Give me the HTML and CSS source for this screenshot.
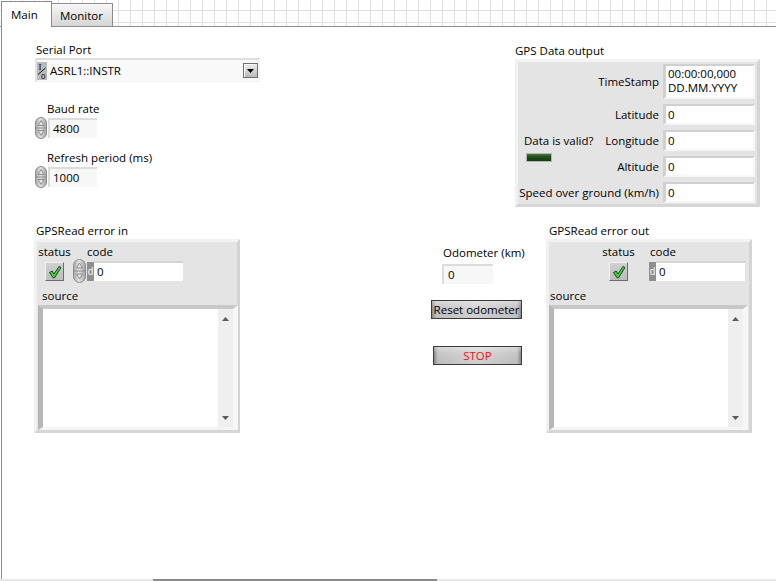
FILE: index.html
```html
<!DOCTYPE html>
<html>
<head>
<meta charset="utf-8">
<title>GPS Read</title>
<link rel="stylesheet" href="styles.css">
</head>
<body>
<div class="window">
  <div class="tabstrip">
    <div class="tab tab-main">Main</div>
    <div class="tab tab-monitor">Monitor</div>
  </div>
  <div class="panel">
    <svg class="defs" width="0" height="0" aria-hidden="true">
      <defs>
        <linearGradient id="spinGrad" x1="0" x2="1" y1="0" y2="0">
          <stop offset="0" stop-color="#a4a4a4"/>
          <stop offset="0.45" stop-color="#e6e6e6"/>
          <stop offset="1" stop-color="#a0a0a0"/>
        </linearGradient>
        <linearGradient id="ledGrad" x1="0" x2="0" y1="0" y2="1">
          <stop offset="0" stop-color="#5c7d4c"/>
          <stop offset="0.35" stop-color="#24501a"/>
          <stop offset="1" stop-color="#123a0c"/>
        </linearGradient>
      </defs>
    </svg>

    <div class="ctl serial">
      <div class="label">Serial Port</div>
      <div class="ring">
        <svg class="io" width="10" height="18" viewBox="0 0 10 18">
          <rect x="0" y="0" width="10" height="18" fill="#b9b9b9"/>
          <text x="1.5" y="8" font-family="Liberation Serif, serif" font-size="9" fill="#000">I</text>
          <line x1="1" y1="12.5" x2="8.5" y2="6" stroke="#000" stroke-width="0.9"/>
          <text x="4" y="17" font-family="Liberation Sans, sans-serif" font-size="8" fill="#000">0</text>
        </svg>
        <span class="ring-text">ASRL1::INSTR</span>
        <span class="drop">
          <svg width="7" height="4" viewBox="0 0 7 4"><path d="M0 0 H7 L3.5 4 Z" fill="#000"/></svg>
        </span>
      </div>
    </div>

    <div class="ctl baud">
      <div class="label numlabel">Baud rate</div>
      <div class="numrow">
        <svg class="spin" width="12" height="22" viewBox="0 0 12 22">
          <rect x="0.5" y="0.5" width="11" height="21" rx="5.5" fill="url(#spinGrad)" stroke="#8c8c8c"/>
          <line x1="1" y1="11" x2="11" y2="11" stroke="#8c8c8c"/>
          <path d="M6 3.5 L9 8.5 L3 8.5 Z" fill="#e4e4e4" stroke="#777" stroke-width="0.8"/>
          <path d="M6 18.5 L9 13.5 L3 13.5 Z" fill="#e4e4e4" stroke="#777" stroke-width="0.8"/>
        </svg>
        <div class="numfield">4800</div>
      </div>
    </div>

    <div class="ctl refresh">
      <div class="label numlabel">Refresh period (ms)</div>
      <div class="numrow">
        <svg class="spin" width="12" height="22" viewBox="0 0 12 22">
          <rect x="0.5" y="0.5" width="11" height="21" rx="5.5" fill="url(#spinGrad)" stroke="#8c8c8c"/>
          <line x1="1" y1="11" x2="11" y2="11" stroke="#8c8c8c"/>
          <path d="M6 3.5 L9 8.5 L3 8.5 Z" fill="#e4e4e4" stroke="#777" stroke-width="0.8"/>
          <path d="M6 18.5 L9 13.5 L3 13.5 Z" fill="#e4e4e4" stroke="#777" stroke-width="0.8"/>
        </svg>
        <div class="numfield">1000</div>
      </div>
    </div>

    <div class="ctl gps">
      <div class="label">GPS Data output</div>
      <div class="cluster gps-box">
        <div class="glabel r1">TimeStamp</div>
        <div class="ind ts r1">
          <div class="ts-line">00:00:00,000</div>
          <div class="ts-line">DD.MM.YYYY</div>
        </div>
        <div class="glabel r2">Latitude</div>
        <div class="ind r2">0</div>
        <div class="valid">
          <span class="valid-text">Data is valid?</span>
          <svg class="led" width="26" height="9" viewBox="0 0 26 9">
            <rect x="0.5" y="0.5" width="25" height="8" fill="url(#ledGrad)" stroke="#b4b4b4"/>
          </svg>
        </div>
        <div class="glabel r3">Longitude</div>
        <div class="ind r3">0</div>
        <div class="glabel r4">Altitude</div>
        <div class="ind r4">0</div>
        <div class="glabel r5 wide">Speed over ground (km/h)</div>
        <div class="ind r5">0</div>
      </div>
    </div>

    <div class="ctl errin">
      <div class="label">GPSRead error in</div>
      <div class="cluster err-box">
        <div class="etop">
          <div class="status-col">
            <div class="label">status</div>
            <div class="statbtn">
              <svg width="14" height="14" viewBox="0 0 14 14"><path d="M1.5 7.5 L4.2 6 L6 9 L11.2 1.2 L13 2.6 L6.6 12.8 L5 12.8 Z" fill="#38d038" stroke="#1c3a1c" stroke-width="0.9" stroke-linejoin="round"/></svg>
            </div>
          </div>
          <div class="code-col">
            <div class="label code-label">code</div>
            <div class="code-row">
              <svg class="spin" width="13" height="24" viewBox="0 0 13 24">
                <rect x="0.5" y="0.5" width="12" height="23" rx="6" fill="url(#spinGrad)" stroke="#8c8c8c"/>
                <line x1="1" y1="12" x2="12" y2="12" stroke="#8c8c8c"/>
                <path d="M6.5 4 L9.5 9 L3.5 9 Z" fill="#e4e4e4" stroke="#777" stroke-width="0.8"/>
                <path d="M6.5 20 L9.5 15 L3.5 15 Z" fill="#e4e4e4" stroke="#777" stroke-width="0.8"/>
              </svg>
              <span class="radix">d</span>
              <div class="codefield">0</div>
            </div>
          </div>
        </div>
        <div class="label source-label">source</div>
        <div class="srcbox">
          <div class="sb">
            <svg width="7" height="4" viewBox="0 0 7 4"><path d="M3.5 0 L7 4 H0 Z" fill="#5a5a5a"/></svg>
            <svg width="7" height="4" viewBox="0 0 7 4"><path d="M0 0 H7 L3.5 4 Z" fill="#5a5a5a"/></svg>
          </div>
        </div>
      </div>
    </div>

    <div class="ctl odo">
      <div class="label numlabel">Odometer (km)</div>
      <div class="numfield odofield">0</div>
      <div class="btn btn-reset">Reset odometer</div>
      <div class="btn btn-stop">STOP</div>
    </div>

    <div class="ctl errout">
      <div class="label">GPSRead error out</div>
      <div class="cluster err-box">
        <div class="etop">
          <div class="status-col">
            <div class="label">status</div>
            <div class="statbtn">
              <svg width="14" height="14" viewBox="0 0 14 14"><path d="M1.5 7.5 L4.2 6 L6 9 L11.2 1.2 L13 2.6 L6.6 12.8 L5 12.8 Z" fill="#38d038" stroke="#1c3a1c" stroke-width="0.9" stroke-linejoin="round"/></svg>
            </div>
          </div>
          <div class="code-col">
            <div class="label code-label">code</div>
            <div class="code-row">
              <span class="radix">d</span>
              <div class="codefield">0</div>
            </div>
          </div>
        </div>
        <div class="label source-label">source</div>
        <div class="srcbox">
          <div class="sb">
            <svg width="7" height="4" viewBox="0 0 7 4"><path d="M3.5 0 L7 4 H0 Z" fill="#5a5a5a"/></svg>
            <svg width="7" height="4" viewBox="0 0 7 4"><path d="M0 0 H7 L3.5 4 Z" fill="#5a5a5a"/></svg>
          </div>
        </div>
      </div>
    </div>
  </div>
  <div class="hscroll"><div class="thumb"></div></div>
</div>
</body>
</html>
```

FILE: styles.css
```css
html, body {
  margin: 0;
  padding: 0;
  background: #fff;
}

body {
  width: 776px;
  height: 581px;
  overflow: hidden;
  font-family: "Open Sans", "Noto Sans", sans-serif;
  font-size: 11.5px;
  color: #000;
}

.window {
  width: 776px;
  height: 581px;
  display: flex;
  flex-direction: column;
}

/* ---------- tabs ---------- */
.tabstrip {
  height: 27px;
  flex: none;
  box-sizing: border-box;
  border-bottom: 1px solid #8c8c8c;
  display: flex;
  align-items: flex-end;
  padding-left: 1px;
  background-color: #fff;
  background-image:
    linear-gradient(to right, #e0e0e0 1px, transparent 1px),
    linear-gradient(to bottom, #e0e0e0 1px, transparent 1px);
  background-size: 12px 12px;
  background-position: 10px 10px;
}

.tab {
  box-sizing: border-box;
  display: flex;
  align-items: center;
  white-space: nowrap;
}

.tab-main {
  width: 51px;
  height: 26px;
  margin-bottom: -1px;
  border: 1px solid #8c8c8c;
  border-bottom: none;
  background: #fff;
  padding-left: 9px;
  padding-bottom: 1px;
}

.tab-monitor {
  width: 61px;
  height: 23px;
  border: 1px solid #8c8c8c;
  border-left: none;
  border-bottom: none;
  background: linear-gradient(#f7f7f7, #d5d5d5);
  padding-left: 8px;
}

/* ---------- panel ---------- */
.panel {
  position: relative;
  height: 552px;
  flex: none;
  margin-left: 1px;
  border-left: 1px solid #8c8c8c;
}

.defs {
  position: absolute;
  width: 0;
  height: 0;
}

.hscroll {
  height: 2px;
  flex: none;
  display: flex;
  background: #e6e6e6;
}

.hscroll .thumb {
  margin-left: 153px;
  width: 284px;
  background: #8a8a8a;
}

.ctl {
  position: absolute;
  display: flex;
  flex-direction: column;
}

.label {
  height: 14px;
  line-height: 14px;
  white-space: nowrap;
}

/* ---------- serial port ring ---------- */
.serial { left: 33px; top: 16px; }
.serial > .label { padding-left: 1px; margin-bottom: 1px; }

.ring {
  width: 225px;
  height: 24px;
  box-sizing: border-box;
  display: flex;
  align-items: center;
  background: #f9f9f9;
  border-style: solid;
  border-width: 2px 1px 1px 2px;
  border-color: #dedede #f2f2f2 #f2f2f2 #e2e2e2;
}

.io {
  flex: none;
  margin-right: 3px;
}

.ring-text {
  flex: 1;
  white-space: nowrap;
}

.drop {
  width: 15px;
  height: 15px;
  box-sizing: border-box;
  margin-right: 1px;
  display: flex;
  align-items: center;
  justify-content: center;
  border: 1px solid #6e6e6e;
  background: linear-gradient(#eeeeee, #b9b9b9);
  box-shadow: inset 1px 1px 0 #fafafa;
}

/* ---------- numeric controls ---------- */
.baud { left: 33px; top: 75px; }
.refresh { left: 33px; top: 124px; }

.numlabel { padding-left: 12px; }

.numrow {
  display: flex;
  align-items: center;
  height: 23px;
}

.spin { flex: none; }

.numfield {
  width: 49px;
  height: 20px;
  box-sizing: border-box;
  margin-left: 1px;
  background: #f7f7f7;
  border-top: 2px solid #dcdcdc;
  border-left: 2px solid #dcdcdc;
  padding-left: 3px;
  line-height: 17px;
}

/* ---------- clusters ---------- */
.cluster {
  box-sizing: border-box;
  background: #e4e4e4;
  border: 3px solid;
  border-color: #f3f3f3 #d4d4d4 #d6d6d6 #f1f1f1;
}

.gps { left: 513px; top: 17px; }
.gps > .label { margin-bottom: 1px; }

.gps-box {
  width: 245px;
  height: 148px;
  display: grid;
  grid-template-columns: 76px 1fr 92px;
  grid-template-rows: 35px repeat(4, 21px);
  column-gap: 4px;
  row-gap: 5px;
  padding: 2px 2px 0 0;
}

.glabel {
  grid-column: 2;
  display: flex;
  align-items: center;
  justify-content: flex-end;
  white-space: nowrap;
}

.glabel.wide { grid-column: 1 / 3; }

.r1 { grid-row: 1; }
.r2 { grid-row: 2; }
.r3 { grid-row: 3; }
.r4 { grid-row: 4; }
.r5 { grid-row: 5; }

.ind {
  grid-column: 3;
  box-sizing: border-box;
  background: #fff;
  border-style: solid;
  border-width: 2px 2px 2px 3px;
  border-color: #d0d0d0 #f6f6f6 #f6f6f6 #d0d0d0;
  padding-left: 2px;
  line-height: 17px;
  white-space: nowrap;
}

.ind.ts {
  display: flex;
  flex-direction: column;
  padding-top: 1px;
}

.ts-line {
  height: 14px;
  line-height: 14px;
}

.valid {
  grid-column: 1;
  grid-row: 3 / 5;
  display: flex;
  flex-direction: column;
  align-items: flex-start;
  padding-left: 6px;
}

.valid-text {
  line-height: 21px;
  white-space: nowrap;
}

.led {
  margin-left: 2px;
  margin-top: 2px;
}

/* ---------- error clusters ---------- */
.errin { left: 32px; top: 197px; }
.errin > .label { padding-left: 2px; margin-bottom: 1px; }
.errout { left: 544px; top: 197px; }
.errout > .label { padding-left: 3px; margin-bottom: 1px; }

.err-box {
  width: 206px;
  height: 194px;
  display: flex;
  flex-direction: column;
}

.etop {
  display: flex;
  padding-top: 3px;
}

.status-col {
  display: flex;
  flex-direction: column;
  align-items: center;
  width: 31px;
}

.errin .status-col { margin-left: 2px; }
.errout .status-col { margin-left: 54px; }

.statbtn {
  width: 19px;
  height: 19px;
  margin-top: 3px;
  box-sizing: border-box;
  background: linear-gradient(#d0d0d0, #bcbcbc);
  border: 1px solid;
  border-color: #f2f2f2 #6c6c6c #6c6c6c #f2f2f2;
  display: flex;
  align-items: center;
  justify-content: center;
}

.errin .code-col { margin-left: 3px; }
.errout .code-col { margin-left: 15px; }

.errin .code-label { padding-left: 14px; }
.errout .code-label { padding-left: 1px; }

.code-row {
  display: flex;
  align-items: center;
  height: 24px;
}

.radix {
  width: 7px;
  height: 19px;
  background: #8e8e8e;
  color: #f4f4f4;
  font-family: "Liberation Sans", sans-serif;
  font-size: 10px;
  line-height: 19px;
  text-align: center;
  overflow: hidden;
}

.errin .radix { margin-left: 1px; }

.codefield {
  height: 20px;
  box-sizing: border-box;
  background: #fff;
  border-top: 2px solid #d4d4d4;
  padding-left: 3px;
  line-height: 17px;
}

.errin .codefield { width: 89px; }
.errout .codefield { width: 89px; }

.source-label { margin-top: 6px; }
.errin .source-label { padding-left: 5px; }
.errout .source-label { padding-left: 1px; }

.srcbox {
  height: 125px;
  margin-top: 2px;
  box-sizing: border-box;
  display: flex;
  background: #fff;
  border-style: solid;
  border-width: 4px 5px 3px 5px;
  border-color: #c8c8c8 #f7f7f7 #f4f4f4 #b6b6b6;
}

.errin .srcbox { width: 200px; margin-left: 1px; }
.errout .srcbox { width: 199px; }

.sb {
  margin-left: auto;
  width: 15px;
  background: #efefef;
  display: flex;
  flex-direction: column;
  justify-content: space-between;
  align-items: center;
  padding: 8px 0 7px;
  box-sizing: border-box;
}

/* ---------- odometer & buttons ---------- */
.odo { left: 429px; top: 219px; }
.odo > .label { margin-bottom: 1px; }

.odofield {
  margin-left: 11px;
  margin-top: 3px;
  width: 51px;
  padding-left: 4px;
}

.btn {
  box-sizing: border-box;
  height: 19px;
  border: 1px solid #3a3a3a;
  background:
    linear-gradient(rgba(255,255,255,0.35), rgba(255,255,255,0) 40%, rgba(0,0,0,0.04)),
    linear-gradient(to right, #8a8a8a, #c4c4c4 4px, #d6d6d6 50%, #c4c4c4 calc(100% - 4px), #8a8a8a);
  display: flex;
  align-items: center;
  justify-content: center;
  white-space: nowrap;
  line-height: 1;
}

.btn-reset {
  margin-top: 16px;
  width: 91px;
}

.btn-stop {
  margin-top: 27px;
  margin-left: 2px;
  width: 89px;
  color: #ee1111;
}
```
